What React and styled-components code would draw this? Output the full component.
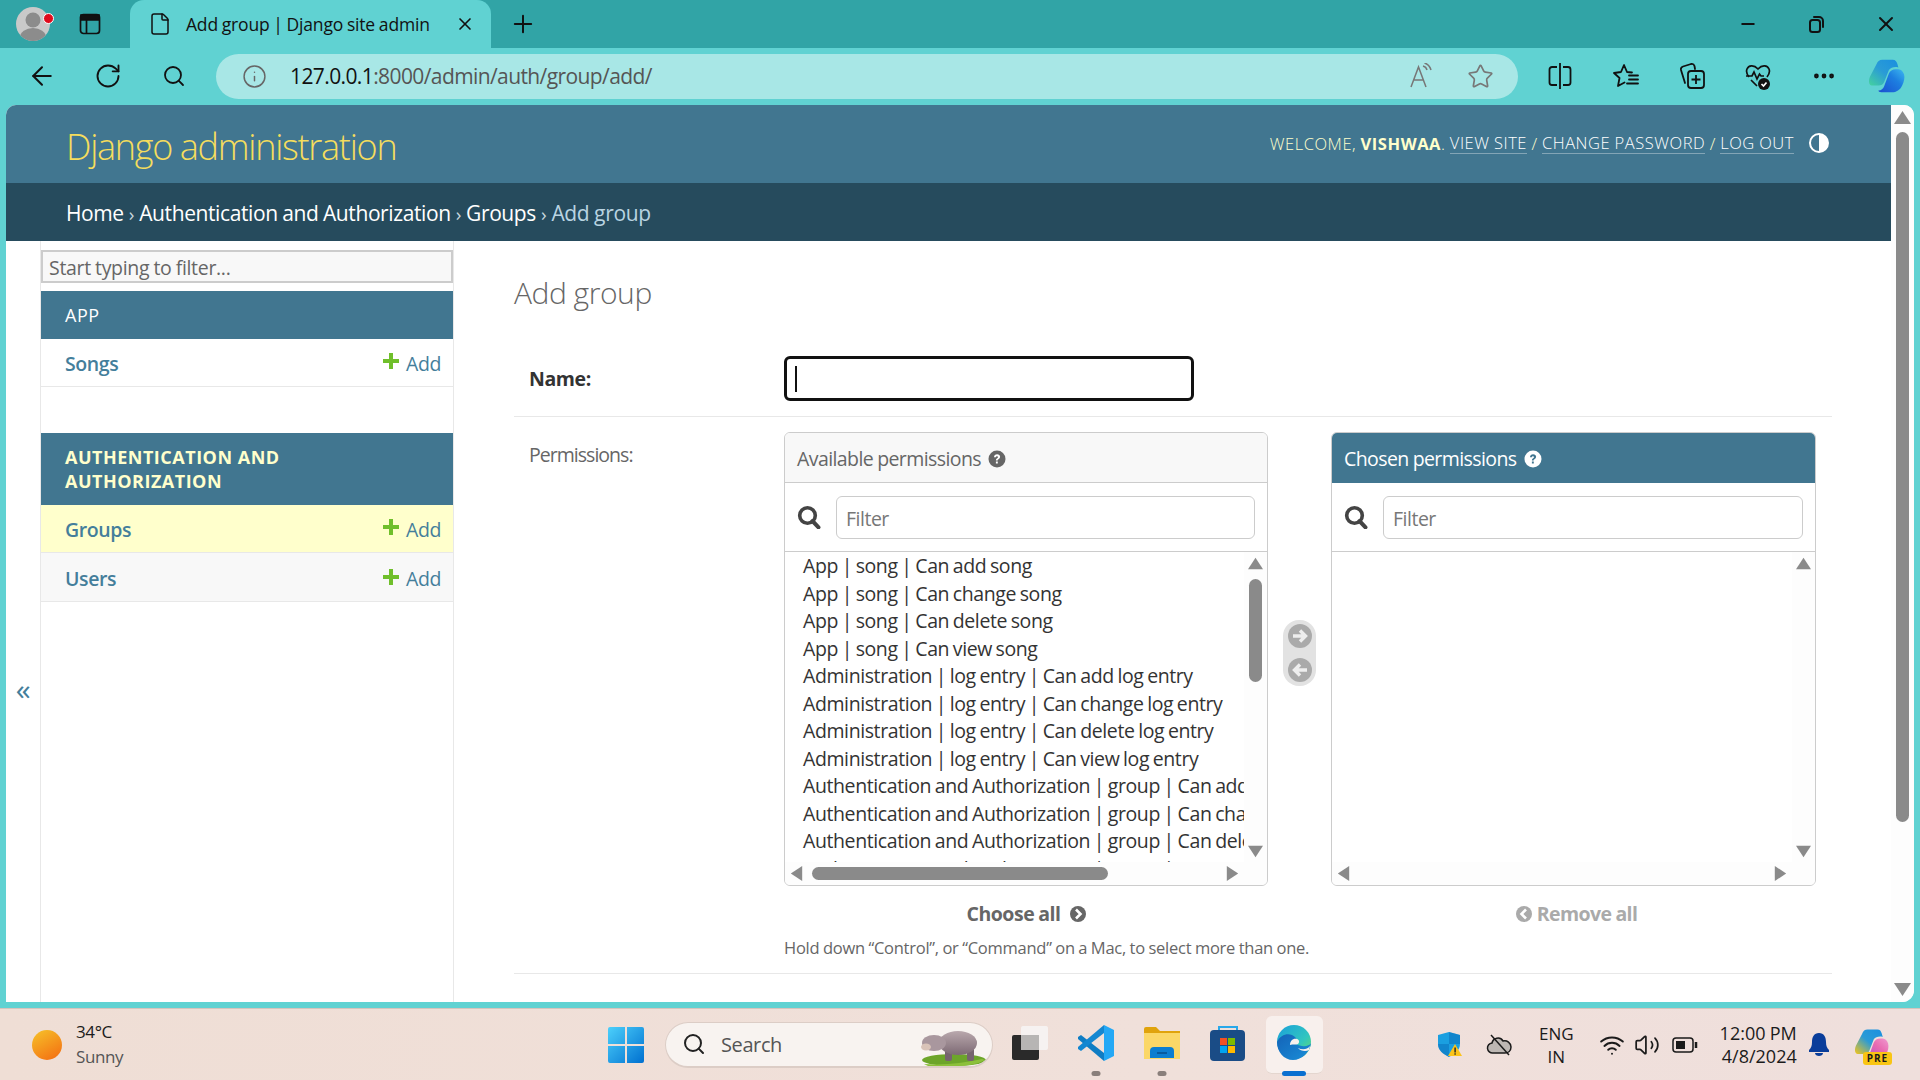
import React from "react";
import styled, { createGlobalStyle } from "styled-components";
import { ArrowLeft, RotateCw, Search, Info, Star, X, Plus, Minus, File, Wifi, Volume2, MoreHorizontal } from "lucide-react";

const FONT = `"Open Sans", "Noto Sans", "Liberation Sans", sans-serif`;

const Global = createGlobalStyle`
  html, body { margin: 0; padding: 0; width: 1920px; height: 1080px; overflow: hidden; }
  * { box-sizing: border-box; }
  body { font-family: ${FONT}; letter-spacing: -.025em; word-spacing: -.03em; }
  input { font-family: ${FONT}; letter-spacing: -.025em; word-spacing: -.03em; }
`;

const Screen = styled.div`
  width: 1920px; height: 1080px; display: flex; flex-direction: column; background: #60d2d2; overflow: hidden;
`;

/* ---------- browser chrome ---------- */
const TabStrip = styled.div`
  height: 48px; flex: none; background: #31a4a6; display: flex; align-items: center; color: #111;
`;
const Avatar = styled.div`
  position: relative; width: 34px; height: 34px; margin-left: 16px; border-radius: 50%; background: #c9c9c9; overflow: hidden;
`;
const AvatarWrap = styled.div` position: relative; flex: none; `;
const RedDot = styled.span`
  position: absolute; top: 6px; right: -4px; width: 11px; height: 11px; border-radius: 50%; background: #e00b1c; border: 1px solid #fff;
`;
const TabActions = styled.div` width: 80px; flex: none; display: flex; justify-content: center; `;
const ActiveTab = styled.div`
  position: relative; width: 361px; height: 48px; flex: none; background: #60d2d2; border-radius: 14px 14px 0 0;
  display: flex; align-items: center; padding: 0 16px 0 18px; font-size: 17.5px; letter-spacing: -.011em; color: #111;
`;
const TabTitle = styled.span` margin-left: 14px; flex: 1; white-space: nowrap; `;
const NewTab = styled.div` margin-left: 18px; width: 28px; display: flex; justify-content: center; `;
const WinControls = styled.div` margin-left: auto; display: flex; `;
const WinBtn = styled.div` width: 69px; display: flex; justify-content: center; align-items: center; `;

const ToolBar = styled.div`
  height: 57px; flex: none; background: #60d2d2; display: flex; align-items: center; padding: 7px 2px 8px 9px; color: #111;
`;
const ToolCell = styled.div`
  width: ${p => p.$w || 66}px; flex: none; display: flex; justify-content: center; align-items: center;
`;
const AddressBar = styled.div`
  width: 1302px; height: 45px; margin: 0 9px 0 9px; flex: none; border-radius: 23px; background: #a8e7e6; display: flex; align-items: center; padding-left: 26px;
`;
const Url = styled.div`
  margin-left: 23px; flex: 1; font-size: 21px; letter-spacing: -.6px; color: #555; white-space: nowrap;
  b { font-weight: 400; color: #111; }
`;
const AddrIcon = styled.div` width: ${p => p.$w || 60}px; flex: none; display: flex; justify-content: center; color: #777; padding-left: ${p => p.$pl || 0}px; `;

/* ---------- page ---------- */
const PageWrap = styled.div` flex: 1; min-height: 0; padding: 0 6px 6px; background: #60d2d2; `;
const Page = styled.div`
  height: 897px; background: #fff; border-radius: 10px 10px 12px 0; overflow: hidden; display: flex;
`;
const PageBody = styled.div` flex: 1; min-width: 0; display: flex; flex-direction: column; `;
const SiteHeader = styled.header`
  height: 78px; flex: none; background: #417690; display: flex; align-items: center; justify-content: space-between; padding: 0 62px 0 60px;
`;
const Branding = styled.h1`
  margin: 0; font-size: 36px; font-weight: 300; letter-spacing: -.035em; color: #f5dd5d; white-space: nowrap; position: relative; top: 2px;
`;
const UserTools = styled.div`
  display: flex; align-items: center; font-size: 16.5px; font-weight: 300; color: #ffc; letter-spacing: .55px; text-transform: uppercase; white-space: pre; position: relative; top: -1px;
  b { font-weight: 700; }
`;
const ToolLink = styled.a` color: #fff; border-bottom: 1px solid rgba(255,255,255,.35); line-height: 20px; `;
const Contrast = styled.span`
  margin-left: 15px; width: 20px; height: 20px; border-radius: 50%; border: 2px solid #fff; background: linear-gradient(90deg, #417690 50%, #fff 50%); 
`;
const Crumbs = styled.nav`
  height: 58px; flex: none; background: #264b5d; color: #fff; display: flex; align-items: center; padding: 1px 0 0 60px; font-size: 21px; white-space: pre;
`;
const CrumbLine = styled.span``;
const CrumbSep = styled.span` color: #c6d6de; font-size: 19px; padding: 0 .5px; `;
const CrumbCur = styled.span` color: #b9d4e2; letter-spacing: -.015em; `;

const Content = styled.div` flex: 1; min-height: 0; display: flex; `;
const ToggleCol = styled.div`
  width: 34px; flex: none; padding-top: 430px; text-align: center; color: #447e9b; font-size: 30px; line-height: 36px; 
`;
const Sidebar = styled.aside`
  width: 414px; flex: none; border-left: 1px solid #e8e8e8; border-right: 1px solid #e8e8e8; padding-top: 9px;
`;
const NavFilter = styled.input`
  display: block; width: 100%; height: 33px; margin-bottom: 8px; border: 2px solid #ccc; background: #f8f8f8; padding: 1px 6px 0; font-size: 19.5px; letter-spacing: -.016em; color: #333;
  &::placeholder { color: #666; opacity: 1; }
`;
const Module = styled.section` margin-bottom: 46px; `;
const Caption = styled.div`
  background: #417690; padding: 12px 24px; font-size: 18px; line-height: 24px; letter-spacing: .5px; word-spacing: 0; text-transform: uppercase;
  color: ${p => p.$current ? "#ffc" : "#fff"}; font-weight: ${p => p.$current ? 700 : 400};
`;
const NavRow = styled.div`
  height: ${p => p.$h || 48}px; display: flex; align-items: center; justify-content: space-between; padding: ${p => p.$h ? 3 : 1}px 12px 0 24px; border-bottom: 1px solid #e8e8e8;
  background: ${p => p.$bg || "#fff"}; font-size: 19.5px; color: #447e9b;
`;
const NavName = styled.a` font-weight: 600; `;
const AddLink = styled.a` display: flex; align-items: center; gap: 7px; svg { position: relative; top: -2px; } `;

const Main = styled.main` flex: 1; min-width: 0; padding: 34px 59px 0 60px; `;
const PageTitle = styled.h2` margin: 0 0 45px; font-size: 30px; line-height: 36px; font-weight: 300; color: #666; `;
const NameRow = styled.div`
  display: flex; align-items: center; padding: 0 0 15px 15px; border-bottom: 1px solid #e8e8e8;
`;
const Label = styled.label`
  width: 255px; flex: none; font-size: 19.5px; color: ${p => p.$strong ? "#333" : "#666"}; font-weight: ${p => p.$strong ? 700 : 400};
`;
const NameField = styled.div`
  width: 410px; height: 45px; border: 3px solid #111; border-radius: 6px; background: #fff; display: flex; align-items: center; padding-left: 8px;
`;
const Caret = styled.span` width: 2px; height: 26px; background: #111; `;
const PermRow = styled.div`
  display: flex; padding: 15px 0 0 15px; border-bottom: 1px solid #e8e8e8; height: 557px;
`;
const PermLabel = styled(Label)` padding-top: 9px; letter-spacing: -.05em; `;
const PermBody = styled.div` display: flex; flex-direction: column; `;
const Chooser = styled.div` display: flex; `;
const SelColumn = styled.div` width: ${p => p.$w}px; flex: none; display: flex; flex-direction: column; `;
const Box = styled.div`
  height: 454px; border: 1px solid #ccc; border-radius: 6px; display: flex; flex-direction: column; overflow: hidden;
`;
const BoxHead = styled.div`
  height: 50px; flex: none; display: flex; align-items: center; gap: 7px; padding: 2px 0 0 12px; font-size: 19.5px; letter-spacing: -.03em;
  background: ${p => p.$chosen ? "#417690" : "#f8f8f8"}; color: ${p => p.$chosen ? "#fff" : "#666"};
  border-bottom: 1px solid ${p => p.$chosen ? "#417690" : "#ccc"};
`;
const FilterBar = styled.div`
  height: 69px; flex: none; border-bottom: 1px solid #ccc; display: flex; align-items: center; padding: 0 12px; gap: 15px; 
`;
const FilterInput = styled.input`
  flex: 1; min-width: 0; height: 43px; border: 1px solid #ccc; border-radius: 6px; padding: 2px 9px 0; font-size: 19.5px; background: #fff;
  &::placeholder { color: #777; opacity: 1; }
`;
const ListGrid = styled.div`
  flex: 1; min-height: 0; display: grid; grid-template-columns: 1fr 23px; grid-template-rows: 1fr 23px;
`;
const ListView = styled.div`
  overflow: hidden; padding-top: 0; background: #fff; min-width: 0;
`;
const ListItem = styled.div`
  height: 27.5px; line-height: 27.5px; padding-left: 18px; font-size: 19.5px; word-spacing: -1px; color: #333; white-space: nowrap;
`;
const VBar = styled.div`
  background: #fdfdfd; display: flex; flex-direction: column; align-items: center; height: 100%; padding: 4px 0 3px;
`;
const HBar = styled.div`
  background: #fdfdfd; display: flex; align-items: center; padding: 0 4px;
`;
const Corner = styled.div` background: #fdfdfd; `;
const Tri = styled.span`
  flex: none; background: #8a8a8a; width: ${p => p.$size || 15}px; height: ${p => p.$size || 15}px;
  clip-path: ${p => ({
    up: "polygon(50% 12%, 100% 88%, 0 88%)",
    down: "polygon(0 12%, 100% 12%, 50% 88%)",
    left: "polygon(88% 0, 88% 100%, 12% 50%)",
    right: "polygon(12% 0, 12% 100%, 88% 50%)",
  }[p.$dir])};
`;
const VThumb = styled.div`
  width: 13px; height: ${p => p.$h}px; margin-top: ${p => p.$top}px; background: #8a8a8a; border-radius: 7px; flex: none;
`;
const HThumb = styled.div`
  height: 13px; width: ${p => p.$w}px; margin-left: 8px; background: #8a8a8a; border-radius: 7px; flex: none;
`;
const Push = styled.div` flex: 1; `;
const MidCol = styled.div` width: 63px; flex: none; display: flex; justify-content: center; align-items: flex-start; padding-top: 188px; `;
const Pill = styled.div`
  width: 33px; height: 66px; background: #e2e2e2; border-radius: 16px; display: flex; flex-direction: column; align-items: center; justify-content: center; gap: 10px;
`;
const AllLink = styled.div`
  height: 52px; padding: 3px 0 0 ${p => p.$off ? 6 : 0}px; display: flex; align-items: center; justify-content: center; gap: ${p => p.$off ? 5 : 9}px; font-size: 19.5px; font-weight: 700; letter-spacing: ${p => p.$off ? "-.03em" : "-.025em"}; color: ${p => p.$off ? "#aaa" : "#666"};
`;
const Help = styled.div` font-size: 16.5px; letter-spacing: -.015em; color: #666; line-height: 20px; `;

const PageScroll = styled.div`
  width: 23px; flex: none; background: #fdfdfd; display: flex; flex-direction: column; align-items: center; padding: 4px 0 4px;
`;

/* ---------- taskbar ---------- */
const TaskBar = styled.div`
  height: 72px; flex: none; display: flex; align-items: center; background: linear-gradient(90deg, #efded5, #f0e0da 60%, #efdfdc); border-top: 1px solid #d6c4bc; color: #1b1b1b;
`;
const Weather = styled.div` width: 604px; flex: none; display: flex; align-items: center; gap: 14px; padding-left: 32px; `;
const Sun = styled.div` width: 30px; height: 30px; border-radius: 50%; background: linear-gradient(150deg, #f6c32a, #f46a10); `;
const WeatherText = styled.div`
  font-size: 17px; line-height: 25px; margin-top: -2px;
  span { display: block; color: #555; }
`;
const StartCell = styled.div` width: 44px; flex: none; display: flex; justify-content: center; `;
const SearchPill = styled.div`
  width: 328px; height: 46px; margin: 0 4px 0 17px; flex: none; background: #f8f3f0; border: 1px solid #dccdc6; border-bottom-width: 2px; border-radius: 23px; display: flex; align-items: center; padding-left: 16px; overflow: hidden;
`;
const SearchWord = styled.span` margin-left: 15px; font-size: 20px; color: #555; flex: 1; `;
const AppCell = styled.div`
  position: relative; width: 66px; height: 72px; flex: none; display: flex; justify-content: center; align-items: center; padding-bottom: 4px;
`;
const ActiveBg = styled.div`
  position: absolute; left: 5px; right: 4px; top: 7px; bottom: 7px; background: #f8f0ed; border-radius: 6px; border-bottom: 1px solid #e4d6cf;
`;
const Running = styled.span`
  position: absolute; bottom: 5px; left: 50%; transform: translateX(-50%); height: 5px; border-radius: 3px;
  width: ${p => p.$active ? 24 : 9}px; background: ${p => p.$active ? "#0a6fd0" : "#8a7f7b"};
`;
const AppIcon = styled.div` position: relative; z-index: 1; display: flex; `;
const TrayCell = styled.div`
  margin-left: ${p => p.$ml || 0}px; flex: none; display: flex; align-items: center; justify-content: center;
`;
const TrayText = styled.div`
  text-align: ${p => p.$align || "center"}; font-size: ${p => p.$size || 17}px; line-height: 23px; white-space: nowrap; letter-spacing: 0;
`;

/* ---------- drawings ---------- */
const PlusIcon = () => (
  <svg width="16" height="16" viewBox="0 0 16 16"><path d="M6 0h4v6h6v4h-6v6H6v-6H0V6h6z" fill="#70bf2b" /></svg>
);
const HelpIcon = ({ bg, fg }) => (
  <svg width="18" height="18" viewBox="0 0 18 18">
    <circle cx="9" cy="9" r="8.5" fill={bg} />
    <path d="M6 7.2c0-1.8 1.4-2.9 3.1-2.9 1.8 0 3 1 3 2.5 0 1.3-.8 1.9-1.6 2.4-.6.4-.8.6-.8 1.3H7.9c0-1.3.4-1.8 1.2-2.3.6-.4.9-.7.9-1.2 0-.5-.4-.8-1-.8-.7 0-1.1.4-1.1 1.1z" fill={fg} />
    <rect x="7.9" y="11.5" width="1.9" height="2" fill={fg} />
  </svg>
);
const DjSearch = () => (
  <svg width="24" height="24" viewBox="0 0 24 24" style={{ flex: "none" }}>
    <circle cx="10.5" cy="10.5" r="7.8" fill="none" stroke="#444" strokeWidth="3.6" />
    <path d="M15.5 16l6 6.3" stroke="#444" strokeWidth="4" strokeLinecap="round" />
  </svg>
);
const CircleArrow = ({ dir, color = "#aaa", size = 24 }) => (
  <svg width={size} height={size} viewBox="0 0 24 24">
    <circle cx="12" cy="12" r="12" fill={color} />
    {dir === "right" ? <path d="M5 12h12M12 6.5l5.5 5.5-5.5 5.5" fill="none" stroke="#eee" strokeWidth="3.4" /> : <path d="M19 12H7M12 6.5L6.5 12l5.5 5.5" fill="none" stroke="#eee" strokeWidth="3.4" />}
  </svg>
);
const CircleChevron = ({ dir, color, size = 16 }) => (
  <svg width={size} height={size} viewBox="0 0 16 16">
    <circle cx="8" cy="8" r="8" fill={color} />
    <path d={dir === "right" ? "M6 3.5L10.5 8 6 12.5" : "M10 3.5L5.5 8l4.5 4.5"} fill="none" stroke="#fff" strokeWidth="2.6" />
  </svg>
);
const Person = () => (
  <svg width="34" height="34" viewBox="0 0 34 34" style={{ display: "block" }}>
    <circle cx="17" cy="13" r="7.5" fill="#8c8c8c" />
    <ellipse cx="17" cy="30" rx="13" ry="9" fill="#8c8c8c" />
  </svg>
);
const TabsIcon = () => (
  <svg width="22" height="22" viewBox="0 0 22 22" fill="none" stroke="#111" strokeWidth="1.7">
    <rect x="1.5" y="1.5" width="19" height="19" rx="3" />
    <path d="M2 2h18v5H2z" fill="#111" />
    <path d="M7.5 7v13" />
  </svg>
);
const RestoreIcon = () => (
  <svg width="16" height="18" viewBox="0 0 16 18" fill="none" stroke="#111" strokeWidth="2">
    <rect x="1" y="5" width="10" height="12" rx="2.5" />
    <path d="M5 2h5a4 4 0 0 1 4 4v6" strokeLinecap="round" />
  </svg>
);
const ReadAloud = () => (
  <svg width="26" height="26" viewBox="0 0 26 26" fill="none" stroke="#777" strokeWidth="1.5">
    <path d="M2 24L9.5 4 17 24M5 17h9" />
    <path d="M14 3c2 .5 3.5 2 4 4M15.5 0c3.5 1 5.5 3.5 6.5 7" />
  </svg>
);
const SplitIcon = () => (
  <svg width="24" height="26" viewBox="0 0 24 26" fill="none" stroke="#111" strokeWidth="1.8">
    <path d="M9 4H4a2.5 2.5 0 0 0-2.5 2.5v13A2.5 2.5 0 0 0 4 22h5M15 4h5a2.5 2.5 0 0 1 2.5 2.5v13A2.5 2.5 0 0 1 20 22h-5" />
    <path d="M12 0v26" />
  </svg>
);
const FavIcon = () => (
  <svg width="26" height="24" viewBox="0 0 26 24" fill="none" stroke="#111" strokeWidth="1.8" strokeLinejoin="round" strokeLinecap="round">
    <path d="M19 8.5l-5-.5L11 1 8 8l-7 1 5.5 5-1.5 8 6.5-3.5" />
    <path d="M16 11.5h9M16 15.5h9M14 19.5h11" />
  </svg>
);
const CollectionsIcon = () => (
  <svg width="26" height="28" viewBox="0 0 26 28" fill="none" stroke="#111" strokeWidth="1.8" strokeLinejoin="round">
    <path d="M6 21L2 8a3 3 0 0 1 2-3.5L12 2a3 3 0 0 1 3.5 2L16 7" strokeLinecap="round" />
    <rect x="9" y="9" width="16" height="17" rx="3" />
    <path d="M17 13v9M12.5 17.5h9" />
  </svg>
);
const HeartIcon = () => (
  <svg width="26" height="28" viewBox="0 0 26 28" fill="none" stroke="#111" strokeWidth="1.7">
    <path d="M4 15C1.5 12 1 9.5 2 7c1.5-3.5 6.5-5 11 0 4.5-5 9.5-3.5 11 0 1 2.5.5 5-2 8" />
    <path d="M1 14h6l2-4 3 7 2.5-5 1.5 2h3M6 18l6 6" />
    <circle cx="19" cy="22" r="6" fill="#111" stroke="none" />
    <path d="M16.5 22l2 2 3-3.5" stroke="#fff" />
  </svg>
);
const CopilotLogo = ({ size = 36, pink }) => (
  <svg width={size} height={size} viewBox="0 0 38 42" preserveAspectRatio="none">
    <defs>
      <linearGradient id={pink ? "cpa2" : "cpa"} x1="0" y1="1" x2="1" y2="0">
        <stop offset="0" stopColor={pink ? "#f5c518" : "#45d29e"} /><stop offset=".5" stopColor="#2a9bd6" /><stop offset="1" stopColor="#1a8fe0" />
      </linearGradient>
      <linearGradient id={pink ? "cpb2" : "cpb"} x1="0" y1="1" x2="1" y2="0">
        <stop offset="0" stopColor={pink ? "#a04fd8" : "#1a4fd0"} /><stop offset=".6" stopColor={pink ? "#e86ab0" : "#1d7fe0"} /><stop offset="1" stopColor={pink ? "#f09ad0" : "#3db8f0"} />
      </linearGradient>
    </defs>
    <path d="M14 2h11c3 0 4 2 5 5l1 4c-4-1-8 0-10 3l-5 14c-1 3-3 4-6 4H3C0 32-1 27 1 22L8 7c1-3 3-5 6-5z" fill={`url(#${pink ? "cpa2" : "cpa"})`} />
    <path d="M24 40H13c-2 0-3-1-3-2 3 0 5-2 6-5l5-15c1-3 4-5 7-5h3c3 0 5 3 6 6 1 4 0 9-2 13-2 5-6 8-11 8z" fill={`url(#${pink ? "cpb2" : "cpb"})`} />
  </svg>
);
const WinLogo = () => (
  <svg width="36" height="36" viewBox="0 0 36 36">
    <defs><linearGradient id="wl" x1="0" y1="0" x2="1" y2="1"><stop offset="0" stopColor="#4cd0fb" /><stop offset="1" stopColor="#0070d0" /></linearGradient></defs>
    <path d="M0 2a2 2 0 0 1 2-2h15v17H0zM19 0h15a2 2 0 0 1 2 2v15H19zM0 19h17v17H2a2 2 0 0 1-2-2zM19 19h17v15a2 2 0 0 1-2 2H19z" fill="url(#wl)" />
  </svg>
);
const Hippo = () => (
  <svg width="66" height="38" viewBox="0 0 66 38" style={{ flex: "none", marginRight: 6, marginTop: 6 }}>
    <defs><linearGradient id="hb" x1="0" y1="0" x2="0" y2="1"><stop offset="0" stopColor="#b9a8ad" /><stop offset="1" stopColor="#7d6a74" /></linearGradient></defs>
    <ellipse cx="34" cy="32" rx="32" ry="6" fill="#6da52a" />
    <path d="M4 36q28 2 58-5l3 1q-10 6-30 6H8z" fill="#8cc03a" />
    <rect x="25" y="20" width="7" height="13" rx="2" fill="#76646e" />
    <rect x="47" y="20" width="7" height="13" rx="2" fill="#76646e" />
    <ellipse cx="38" cy="15" rx="19" ry="12" fill="url(#hb)" />
    <ellipse cx="14" cy="15" rx="12" ry="8" fill="#a9979e" />
    <ellipse cx="6" cy="19" rx="5" ry="3.5" fill="#d9c3b8" />
  </svg>
);
const TaskViewApp = () => (
  <svg width="38" height="36" viewBox="0 0 38 36">
    <rect x="1" y="10" width="27" height="25" rx="2" fill="#2a2a2a" />
    <rect x="10" y="1" width="27" height="24" rx="2" fill="#f6f4f3" opacity=".9" />
    <rect x="10" y="10" width="18" height="15" fill="#b7b5b4" />
  </svg>
);
const VSCode = () => (
  <svg width="38" height="38" viewBox="0 0 38 38">
    <path d="M1 13l3-2 23 18v8L1 15z" fill="#0f7dc4" />
    <path d="M1 25l3 2 23-18V1L1 23z" fill="#1487d1" />
    <path d="M27 1l10 5v26l-10 5z" fill="#24a8f5" />
  </svg>
);
const FolderIcon = () => (
  <svg width="36" height="34" viewBox="0 0 36 34">
    <path d="M0 3a2 2 0 0 1 2-2h10l4 4H36v4H0z" fill="#e0a30c" />
    <path d="M0 7h36v26H0z" fill="#fbd767" />
    <path d="M6 26a4 4 0 0 1 4-4h16a4 4 0 0 1 4 4v7H6z" transform="translate(0 -1)" fill="#0c7ed0" />
    <path d="M13 27h10" stroke="#05508f" strokeWidth="1.5" />
  </svg>
);
const StoreIcon = () => (
  <svg width="36" height="36" viewBox="0 0 36 36">
    <path d="M9 6V2h18v4" fill="none" stroke="#29a8ea" strokeWidth="2" />
    <rect x="0" y="5" width="35" height="31" rx="4" fill="#1a4c86" />
    <rect x="10" y="13" width="7" height="7" fill="#f25022" />
    <rect x="18" y="13" width="7" height="7" fill="#7fba00" />
    <rect x="10" y="21" width="7" height="7" fill="#00a4ef" />
    <rect x="18" y="21" width="7" height="7" fill="#ffb900" />
  </svg>
);
const EdgeIcon = () => (
  <svg width="36" height="36" viewBox="0 0 36 36">
    <defs>
      <linearGradient id="ea" x1="0" y1="0" x2="1" y2="1"><stop offset="0" stopColor="#1aa0da" /><stop offset=".6" stopColor="#31c5c0" /><stop offset="1" stopColor="#6ee05c" /></linearGradient>
      <linearGradient id="eb" x1="0" y1="0" x2="1" y2="1"><stop offset="0" stopColor="#1463b8" /><stop offset="1" stopColor="#1a8ed8" /></linearGradient>
    </defs>
    <circle cx="18" cy="17" r="17" fill="url(#ea)" />
    <path d="M1 17c3-7 10-9 15-7 5 2 6 7 4 9 5 3 13 3 15-1-1 9-9 17-18 17C8 35 1 27 1 17z" fill="url(#eb)" />
    <path d="M14 20c0-4 3-7 7-6 2 .6 3 3 1 5-2 1-5 0-8 1z" fill="#f8f0ed" />
    <path d="M22 23c4 2 9 2 12-2l-1 4c-3 2-9 1-11-2z" fill="#f8f0ed" />
  </svg>
);
const ShieldIcon = () => (
  <svg width="24" height="25" viewBox="0 0 24 25">
    <path d="M11 0l11 3v9c0 6-5 10-11 13C5 22 0 18 0 12V3z" fill="#1a9fe0" />
    <path d="M11 0l11 3v9H11zM0 12h11v13C5 22 0 18 0 12z" fill="#0b6fbb" opacity=".55" />
    <path d="M17 12l7 12H10z" fill="#fcc419" />
    <rect x="16.4" y="15.5" width="1.4" height="5" fill="#222" /><rect x="16.4" y="21.3" width="1.4" height="1.4" fill="#222" />
  </svg>
);
const CloudOff = () => (
  <svg width="26" height="22" viewBox="0 0 26 22" fill="none" stroke="#1a1a1a" strokeWidth="1.5">
    <path d="M7 19a5 5 0 0 1-1-10c1-5 8-7 11-2 4-1 8 2 8 6s-3 6-6 6z" fill="#bdb7b3" />
    <path d="M5 1l18 20" />
  </svg>
);
const Battery = () => (
  <svg width="26" height="16" viewBox="0 0 26 16" fill="none" stroke="#1a1a1a" strokeWidth="1.5">
    <rect x="1" y="1" width="20" height="14" rx="3" />
    <rect x="4" y="4" width="9" height="8" fill="#1a1a1a" stroke="none" />
    <path d="M24 5v6" strokeWidth="2.5" />
  </svg>
);
const Bell = () => (
  <svg width="20" height="24" viewBox="0 0 20 24">
    <path d="M10 0c5 0 7 4 7 9 0 4 1 6 3 8v2H0v-2c2-2 3-4 3-8 0-5 2-9 7-9z" fill="#0a3d9a" />
    <path d="M6 20h8c0 2-2 3-4 3s-4-1-4-3z" fill="#0a3d9a" />
  </svg>
);
const CopilotPre = styled.div` position: relative; display: flex; `;
const PreBadge = styled.span`
  position: absolute; left: 8px; bottom: -3px; background: #f9c513; color: #1a1a1a; font-size: 10px; font-weight: 700; letter-spacing: 1px; padding: 0 4px; line-height: 13px; border-radius: 3px;
`;

const perms = [
  "App | song | Can add song", "App | song | Can change song", "App | song | Can delete song", "App | song | Can view song",
  "Administration | log entry | Can add log entry", "Administration | log entry | Can change log entry",
  "Administration | log entry | Can delete log entry", "Administration | log entry | Can view log entry",
  "Authentication and Authorization | group | Can add group", "Authentication and Authorization | group | Can change group",
  "Authentication and Authorization | group | Can delete group", "Authentication and Authorization | group | Can view group",
];

const VArrows = ({ thumb }) => (
  <VBar>
    <Tri $dir="up" />
    {thumb && <VThumb $h={103} $top={8} />}
    <Push />
    <Tri $dir="down" />
  </VBar>
);

export default function App() {
  return (
    <>
      <Global />
      <Screen>
        <TabStrip>
          <AvatarWrap><Avatar><Person /></Avatar><RedDot /></AvatarWrap>
          <TabActions><TabsIcon /></TabActions>
          <ActiveTab>
            <File size={24} strokeWidth={1.5} />
            <TabTitle>Add group | Django site admin</TabTitle>
            <X size={20} strokeWidth={2} />
          </ActiveTab>
          <NewTab><Plus size={28} strokeWidth={1.7} /></NewTab>
          <WinControls>
            <WinBtn><Minus size={20} strokeWidth={2.2} /></WinBtn>
            <WinBtn><RestoreIcon /></WinBtn>
            <WinBtn><X size={24} strokeWidth={2} /></WinBtn>
          </WinControls>
        </TabStrip>
        <ToolBar>
          <ToolCell><ArrowLeft size={30} strokeWidth={1.6} /></ToolCell>
          <ToolCell><RotateCw size={28} strokeWidth={1.6} /></ToolCell>
          <ToolCell><Search size={24} strokeWidth={1.8} /></ToolCell>
          <AddressBar>
            <Info size={25} strokeWidth={1.4} color="#666" />
            <Url><b>127.0.0.1</b>:8000/admin/auth/group/add/</Url>
            <AddrIcon $pl={4}><ReadAloud /></AddrIcon>
            <AddrIcon><Star size={27} strokeWidth={1.5} /></AddrIcon>
            <AddrIcon $w={8} />
          </AddressBar>
          <ToolCell><SplitIcon /></ToolCell>
          <ToolCell><FavIcon /></ToolCell>
          <ToolCell><CollectionsIcon /></ToolCell>
          <ToolCell><HeartIcon /></ToolCell>
          <ToolCell><MoreHorizontal size={26} strokeWidth={2.4} /></ToolCell>
          <ToolCell $w={60}><CopilotLogo /></ToolCell>
        </ToolBar>
        <PageWrap>
          <Page>
            <PageBody>
              <SiteHeader>
                <Branding>Django administration</Branding>
                <UserTools>
                  {"Welcome, "}<b>Vishwaa</b>{". "}<ToolLink>View site</ToolLink>{" / "}<ToolLink>Change password</ToolLink>{" / "}<ToolLink>Log out</ToolLink>
                  <Contrast />
                </UserTools>
              </SiteHeader>
              <Crumbs>
                <CrumbLine>Home <CrumbSep>›</CrumbSep> Authentication and Authorization <CrumbSep>›</CrumbSep> Groups <CrumbSep>›</CrumbSep> <CrumbCur>Add group</CrumbCur></CrumbLine>
              </Crumbs>
              <Content>
                <ToggleCol>«</ToggleCol>
                <Sidebar>
                  <NavFilter placeholder="Start typing to filter..." />
                  <Module>
                    <Caption>App</Caption>
                    <NavRow><NavName>Songs</NavName><AddLink><PlusIcon />Add</AddLink></NavRow>
                  </Module>
                  <Module>
                    <Caption $current>Authentication and Authorization</Caption>
                    <NavRow $bg="#ffc"><NavName>Groups</NavName><AddLink><PlusIcon />Add</AddLink></NavRow>
                    <NavRow $bg="#f8f8f8" $h={49}><NavName>Users</NavName><AddLink><PlusIcon />Add</AddLink></NavRow>
                  </Module>
                </Sidebar>
                <Main>
                  <PageTitle>Add group</PageTitle>
                  <NameRow>
                    <Label $strong>Name:</Label>
                    <NameField><Caret /></NameField>
                  </NameRow>
                  <PermRow>
                    <PermLabel>Permissions:</PermLabel>
                    <PermBody>
                      <Chooser>
                        <SelColumn $w={484}>
                          <Box>
                            <BoxHead>Available permissions <HelpIcon bg="#666" fg="#fff" /></BoxHead>
                            <FilterBar><DjSearch /><FilterInput placeholder="Filter" /></FilterBar>
                            <ListGrid>
                              <ListView>{perms.map(p => <ListItem key={p}>{p}</ListItem>)}</ListView>
                              <VArrows thumb />
                              <HBar><Tri $dir="left" /><HThumb $w={296} /><Push /><Tri $dir="right" /></HBar>
                              <Corner />
                            </ListGrid>
                          </Box>
                          <AllLink>Choose all <CircleChevron dir="right" color="#666" /></AllLink>
                        </SelColumn>
                        <MidCol>
                          <Pill><CircleArrow dir="right" /><CircleArrow dir="left" /></Pill>
                        </MidCol>
                        <SelColumn $w={485}>
                          <Box>
                            <BoxHead $chosen>Chosen permissions <HelpIcon bg="#fff" fg="#417690" /></BoxHead>
                            <FilterBar><DjSearch /><FilterInput placeholder="Filter" /></FilterBar>
                            <ListGrid>
                              <ListView />
                              <VArrows />
                              <HBar><Tri $dir="left" /><Push /><Tri $dir="right" /></HBar>
                              <Corner />
                            </ListGrid>
                          </Box>
                          <AllLink $off><CircleChevron dir="left" color="#aaa" /> Remove all</AllLink>
                        </SelColumn>
                      </Chooser>
                      <Help>Hold down “Control”, or “Command” on a Mac, to select more than one.</Help>
                    </PermBody>
                  </PermRow>
                </Main>
              </Content>
            </PageBody>
            <PageScroll>
              <Tri $dir="up" $size={17} />
              <VThumb $h={690} $top={6} />
              <Push />
              <Tri $dir="down" $size={17} />
            </PageScroll>
          </Page>
        </PageWrap>
        <TaskBar>
          <Weather>
            <Sun />
            <WeatherText>34°C<span>Sunny</span></WeatherText>
          </Weather>
          <StartCell><WinLogo /></StartCell>
          <SearchPill>
            <Search size={24} strokeWidth={2} color="#222" />
            <SearchWord>Search</SearchWord>
            <Hippo />
          </SearchPill>
          <AppCell><AppIcon><TaskViewApp /></AppIcon></AppCell>
          <AppCell><AppIcon><VSCode /></AppIcon><Running /></AppCell>
          <AppCell><AppIcon><FolderIcon /></AppIcon><Running /></AppCell>
          <AppCell><AppIcon><StoreIcon /></AppIcon></AppCell>
          <AppCell><ActiveBg /><AppIcon><EdgeIcon /></AppIcon><Running $active /></AppCell>
          <TrayCell $ml={111}><ShieldIcon /></TrayCell>
          <TrayCell $ml={24}><CloudOff /></TrayCell>
          <TrayCell $ml={27}><TrayText>ENG<br />IN</TrayText></TrayCell>
          <TrayCell $ml={25}><Wifi size={26} strokeWidth={1.8} /></TrayCell>
          <TrayCell $ml={9}><Volume2 size={26} strokeWidth={1.6} /></TrayCell>
          <TrayCell $ml={12}><Battery /></TrayCell>
          <TrayCell $ml={22}><TrayText $size={18} $align="right">12:00 PM<br />4/8/2024</TrayText></TrayCell>
          <TrayCell $ml={12}><Bell /></TrayCell>
          <TrayCell $ml={26}><CopilotPre><CopilotLogo size={34} pink /><PreBadge>PRE</PreBadge></CopilotPre></TrayCell>
        </TaskBar>
      </Screen>
    </>
  );
}
